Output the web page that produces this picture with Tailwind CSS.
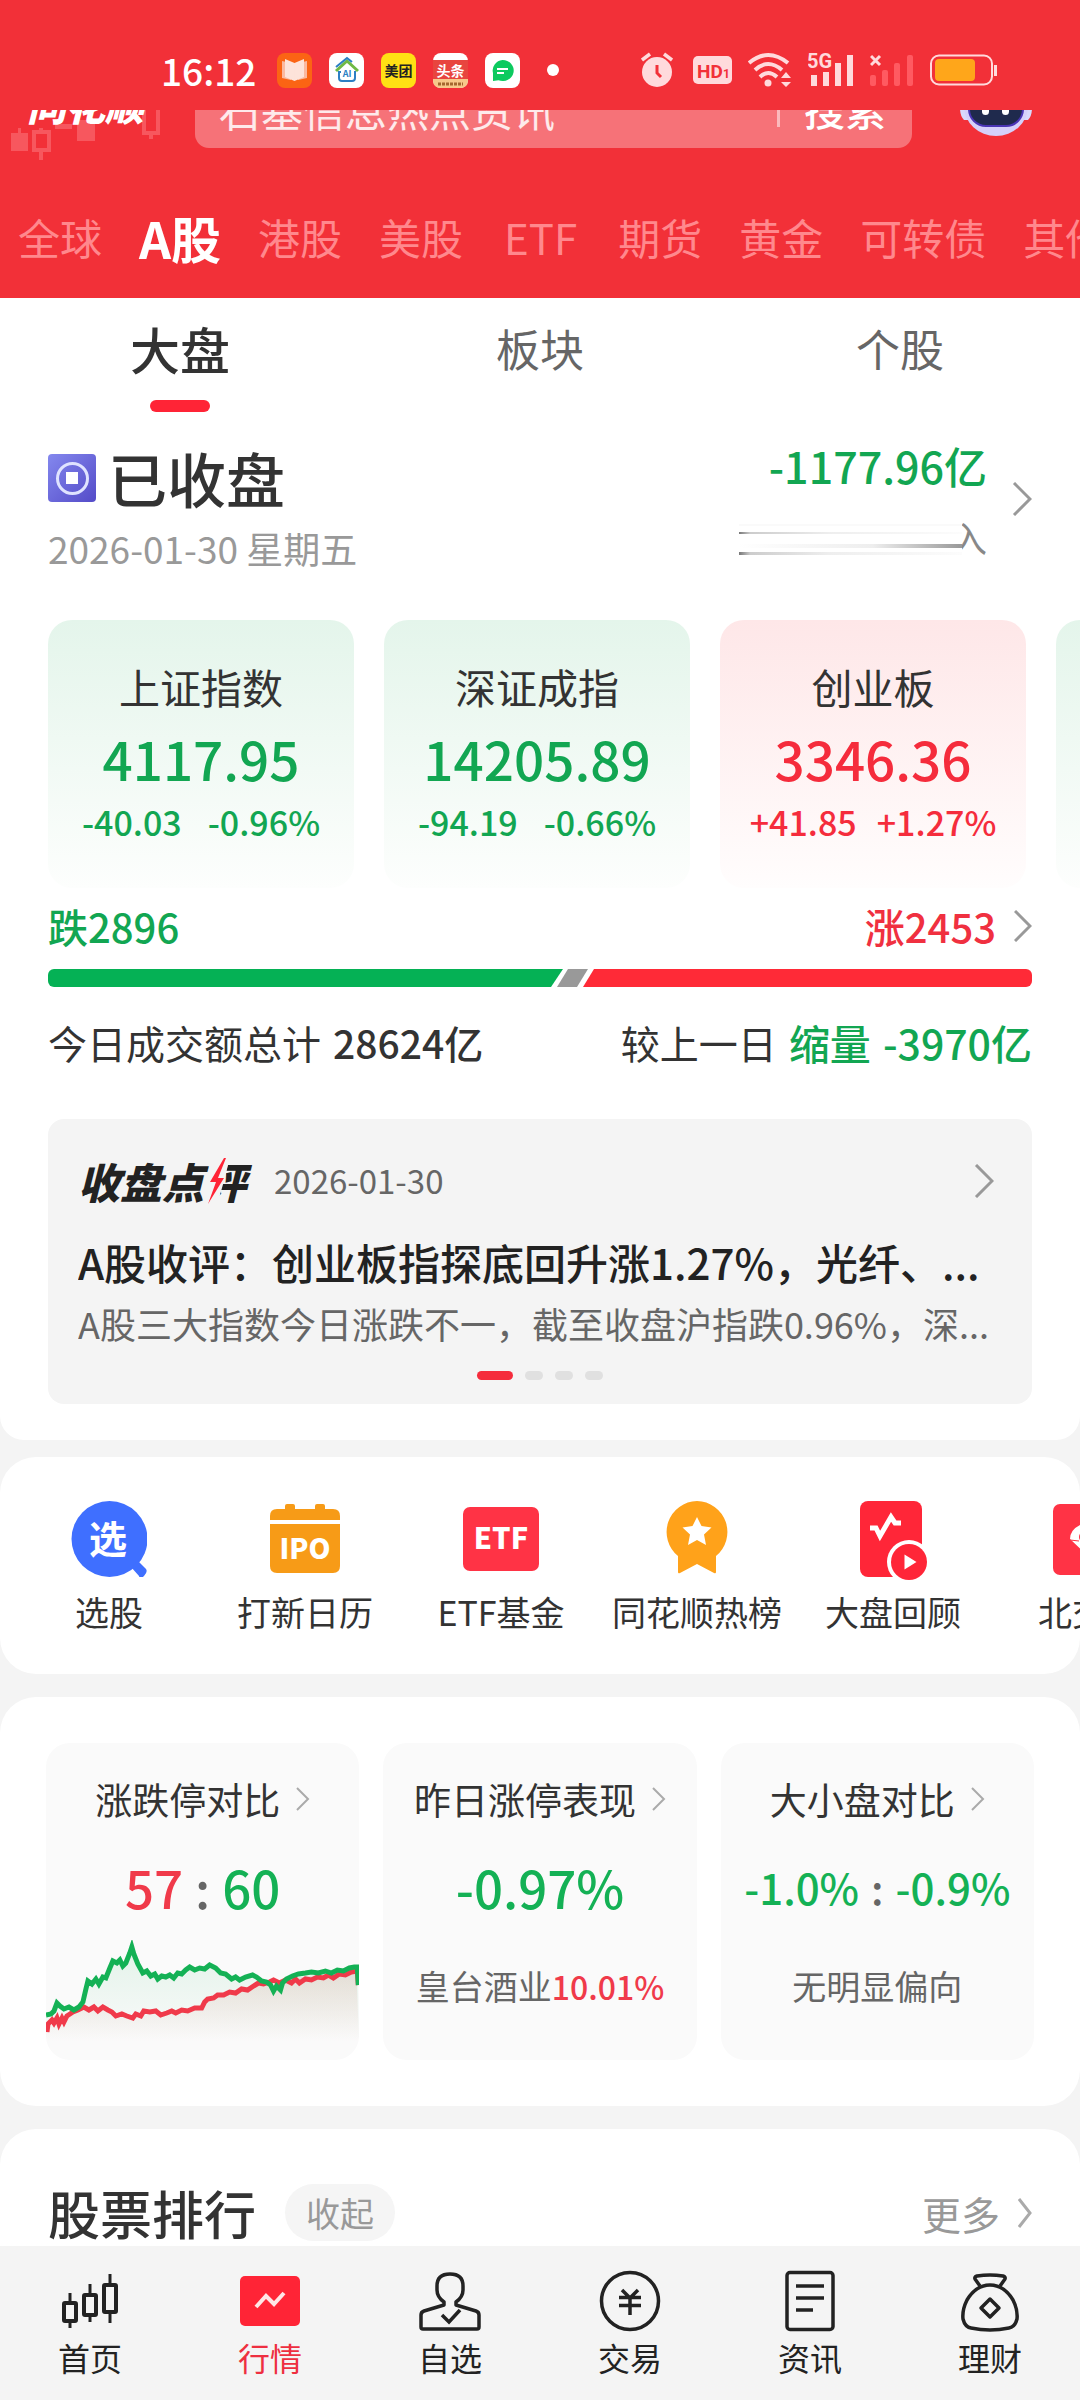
<!DOCTYPE html>
<html lang="zh-CN">
<head>
    <meta charset="UTF-8">
    <meta name="viewport" content="width=device-width, initial-scale=1.0">
    <title>行情 - A股</title>
    <script src="https://cdn.jsdelivr.net/npm/@tailwindcss/browser@4"></script>
</head>
<body class="bg-[#f4f4f4] min-h-screen flex flex-col overflow-x-hidden font-['Noto_Sans_CJK_SC',sans-serif] text-[#333]">

    <header class="bg-[#f23038] text-white">
        <!-- Status bar -->
        <div class="h-[110px] pt-[30px] pl-[161px] pr-[82px] flex items-center justify-between">
            <div class="flex items-center gap-[17px]">
                <span class="text-[37px] leading-10 font-medium mr-[4px]">16:12</span>
                <svg class="size-[35px]" viewBox="0 0 35 35">
                    <rect width="35" height="35" rx="8" fill="#fb6414"/>
                    <path d="M5 8l9 2v17l-9-2zM30 8l-9 2v17l9-2z" fill="#fbb9a0"/>
                    <path d="M8 6l9.500 4v18L8 24zM27 6l-9.500 4v18L27 24z" fill="#fde3da"/>
                </svg>
                <svg class="size-[35px]" viewBox="0 0 35 35">
                    <rect width="35" height="35" rx="8" fill="#fff"/>
                    <path d="M7 18L18 8l11 10" fill="none" stroke="#6fb944" stroke-width="3"/>
                    <path d="M7 14L18 5l5 4" fill="none" stroke="#2c7fc4" stroke-width="2"/>
                    <path d="M12 19H10v6q0 3 3 3h10q3 0 3-3v-6h-1" fill="none" stroke="#2c7fc4" stroke-width="2"/>
                    <text x="18" y="24" font-size="9" font-weight="700" fill="#2c7fc4" text-anchor="middle">AI</text>
                </svg>
                <svg class="size-[35px]" viewBox="0 0 35 35">
                    <rect width="35" height="35" rx="8" fill="#ffe014"/>
                    <text x="17.500" y="23" font-size="14" font-weight="700" fill="#222" text-anchor="middle">美团</text>
                </svg>
                <svg class="size-[35px]" viewBox="0 0 35 35">
                    <rect width="35" height="35" rx="8" fill="#fff"/>
                    <path d="M0 7h35v19H0z" fill="#e8453f"/>
                    <path d="M0 26h35v1q0 8-8 8H8q-8 0-8-8z" fill="#f7c98a"/>
                    <text x="17.500" y="23" font-size="14" font-weight="700" fill="#fff" text-anchor="middle">头条</text>
                    <path d="M5 31h25" stroke="#a5672f" stroke-width="3" stroke-dasharray="3 1"/>
                </svg>
                <svg class="size-[35px]" viewBox="0 0 35 35">
                    <rect width="35" height="35" rx="8" fill="#fff"/>
                    <path d="M17.500 7a11 10.500 0 1 1-4 20.200L8 28V20a11 10.500 0 0 1 9.500-13z" fill="#0cca5f"/>
                    <path d="M12 16h11M12 20h7" stroke="#fff" stroke-width="1.800"/>
                </svg>
                <span class="size-3 ml-[10px] rounded-full bg-white"></span>
            </div>
            <div class="flex items-center gap-4 text-[#ffdadc]">
                <svg class="w-8 h-9" viewBox="0 0 32 36" fill="currentColor">
                    <circle cx="16" cy="20" r="15"/>
                    <path d="M1 8l8-6M31 8l-8-6" stroke="currentColor" stroke-width="3.500"/>
                    <path d="M16 13v8l4 4" fill="none" stroke="#f23038" stroke-width="3"/>
                </svg>
                <svg class="w-[39px] h-7 ml-1" viewBox="0 0 39 28">
                    <rect width="39" height="28" rx="5" fill="currentColor"/>
                    <text x="4" y="22" font-size="19" font-weight="700" fill="#f23038" font-family="Liberation Sans Narrow, Roboto">HD</text>
                    <text x="30" y="22" font-size="12" font-weight="700" fill="#f23038" font-family="Roboto">1</text>
                </svg>
                <svg class="w-[44px] h-9" viewBox="0 0 44 36" fill="none" stroke="currentColor" stroke-width="4">
                    <path d="M1 11q19-16 39 0M7 18q13-12 27 0M12 25q8-8 17 0"/>
                    <circle cx="20" cy="31" r="3.500" fill="currentColor" stroke="none"/>
                    <path d="M38 20l5 6H33zM38 35l5-5H33z" fill="currentColor" stroke="none"/>
                </svg>
                <svg class="w-[46px] h-9" viewBox="0 0 46 36" fill="currentColor">
                    <text x="-1" y="16" font-size="20" font-weight="700" font-family="Liberation Sans Narrow, Roboto">5G</text>
                    <rect x="3" y="23" width="6" height="11"/><rect x="15" y="20" width="6" height="14"/>
                    <rect x="27" y="11" width="6" height="23"/><rect x="39" y="3" width="6" height="31"/>
                </svg>
                <svg class="w-[44px] h-9" viewBox="0 0 44 36">
                    <path d="M1 4l9 9M10 4l-9 9" stroke="currentColor" stroke-width="3"/>
                    <g fill="#ff5a61"><rect y="23" width="6" height="11" rx="2"/><rect x="12" y="18" width="6" height="16" rx="2"/><rect x="24" y="11" width="6" height="23" rx="2"/><rect x="37" y="3" width="6" height="31" rx="2"/></g>
                </svg>
                <svg class="w-[68px] h-8" viewBox="0 0 68 32">
                    <rect x="1" y="1.500" width="61" height="29" rx="8" fill="none" stroke="currentColor" stroke-width="2"/>
                    <rect x="5" y="5" width="40" height="22" rx="4" fill="#ffa61a"/>
                    <path d="M65.500 11v11" stroke="currentColor" stroke-width="3"/>
                </svg>
            </div>
        </div>

        <!-- Search row, scrolled partly under the status bar -->
        <div class="relative h-[70px] overflow-hidden flex items-end">
            <svg class="absolute left-0 top-0 w-[170px] h-[56px]" viewBox="0 0 170 56">
                <g fill="#f7575e"><rect x="11" y="23" width="17" height="18"/><rect x="18" y="18" width="3" height="6"/><rect x="77" y="10" width="18" height="21"/><rect x="55" y="14" width="17" height="5"/></g>
                <g fill="none" stroke="#f7575e" stroke-width="4"><rect x="34" y="22" width="15" height="18"/><path d="M41 42v8M41 18v3M144 0v23h14V0M151 23v6"/></g>
            </svg>
            <div class="relative shrink-0 w-full h-28 pb-8 pl-[27px] pr-12 flex items-center">
                <span class="w-[168px] pb-2 text-[39px] leading-[52px] font-black italic">同花顺</span>
                <div class="flex-1 h-20 rounded-[14px] bg-white/32 flex items-center pl-6 pr-[26px]">
                    <input type="text" aria-label="搜索股票" placeholder="石基信息热点资讯" class="flex-1 min-w-0 h-14 text-[42px] placeholder:text-white/85 outline-none">
                    <span class="w-[3px] h-[38px] mr-6 bg-white/50"></span>
                    <button type="button" class="text-[41px] leading-[52px] font-medium">搜索</button>
                </div>
                <button type="button" aria-label="智能助手" class="ml-12">
                    <svg class="w-[72px] h-20" viewBox="0 0 72 80">
                        <path d="M0 40h8v12H4q-4-4-4-12zM72 40h-8v12h4q4-4 4-12z" fill="#d9d9fb"/>
                        <ellipse cx="36" cy="38" rx="32" ry="30" fill="#d5d0fa"/>
                        <rect x="9" y="16" width="54" height="42" rx="17" fill="#1f2a4d" stroke="#4a35b5" stroke-width="2"/>
                        <rect x="22" y="32" width="7" height="15" rx="3.500" fill="#fff"/><rect x="42" y="32" width="7" height="15" rx="3.500" fill="#fff"/>
                    </svg>
                </button>
            </div>
        </div>

        <!-- Market tabs -->
        <nav class="h-[118px] pl-[18px] pb-[5px] flex items-center gap-[37px] overflow-hidden whitespace-nowrap text-[42px] leading-[60px] text-[#ff888d]">
            <a href="#">全球</a>
            <a href="#" class="text-[50px] font-bold text-white" aria-current="page">A股</a>
            <a href="#">港股</a>
            <a href="#">美股</a>
            <a href="#" class="px-1">ETF</a>
            <a href="#">期货</a>
            <a href="#">黄金</a>
            <a href="#">可转债</a>
            <a href="#">其他</a>
        </nav>
    </header>

    <main class="flex-1">
        <section class="bg-white rounded-b-3xl pb-9">
            <div class="grid grid-cols-3 h-[122px] items-start text-[44px] leading-[60px] text-[#666]">
                <button type="button" class="pt-5 flex flex-col items-center gap-[22px] text-[50px] font-medium text-[#333]">
                    大盘
                    <span class="w-[60px] h-3 rounded-full bg-[#ff2436]"></span>
                </button>
                <button type="button" class="pt-5">板块</button>
                <button type="button" class="pt-5">个股</button>
            </div>

            <div class="px-12 pt-[21px] flex justify-between">
                <div class="pt-[7px]">
                    <h1 class="flex items-center gap-3 text-[59px] leading-[60px] font-medium">
                        <svg class="size-12" viewBox="0 0 48 48">
                            <defs><linearGradient id="coin" x1="0" y1="0" x2="1" y2="1"><stop stop-color="#8488ee"/><stop offset="1" stop-color="#544bc8"/></linearGradient></defs>
                            <rect width="48" height="48" rx="4" fill="url(#coin)"/>
                            <circle cx="24.500" cy="24.500" r="15" fill="none" stroke="#dfe3ff" stroke-width="3"/>
                            <rect x="18" y="18" width="12" height="12" fill="#fff"/>
                        </svg>
                        已收盘
                    </h1>
                    <p class="mt-5 text-[37px] leading-10 text-[#999]">2026-01-30 星期五</p>
                </div>
                <a href="#" class="h-[115px] flex items-center gap-[25px]">
                    <div class="flex flex-col items-end gap-[33px]">
                        <span class="text-[43px] leading-[48px] font-medium text-[#12a652]">-1177.96亿</span>
                        <span class="flex h-[34px] text-[#888]">
                            <svg class="w-[223px] h-[34px]" viewBox="0 0 223 34">
                                <defs>
                                    <linearGradient id="fadeOut"><stop stop-color="#777"/><stop offset=".05" stop-color="#ccc"/><stop offset=".4" stop-color="#eee"/><stop offset="1" stop-color="#fcfcfc"/></linearGradient>
                                    <linearGradient id="fadeIn"><stop stop-color="#fff"/><stop offset=".6" stop-color="#eee"/><stop offset="1" stop-color="#999"/></linearGradient>
                                </defs>
                                <rect y="10" width="223" height="2" fill="url(#fadeOut)"/>
                                <rect y="30" width="223" height="3" fill="url(#fadeOut)"/>
                                <rect y="22" width="223" height="4" fill="url(#fadeIn)"/>
                                <rect y="2" width="223" height="2" fill="#fafafa"/>
                            </svg>
                            <span class="w-[25px] flex justify-end overflow-hidden text-[36px] leading-[30px]">入</span>
                        </span>
                    </div>
                    <svg class="w-5 h-[34px]" viewBox="0 0 20 34" fill="none" stroke="#999" stroke-width="3"><path d="M2 1l16 16L2 33"/></svg>
                </a>
            </div>

            <!-- Index cards -->
            <div class="mt-[52px] pl-12 flex gap-[30px] overflow-hidden text-center">
                <a href="#" class="shrink-0 w-[306px] pt-[38px] pb-[46px] flex flex-col gap-3 rounded-3xl bg-linear-to-b from-[#e4f5eb] to-[#fdfefd] text-[#12a652]">
                    <span class="text-[41px] leading-[56px] text-[#333]">上证指数</span>
                    <span class="text-[53px] leading-[64px] font-medium">4117.95</span>
                    <span class="flex justify-center gap-[26px] text-[34px] leading-10 font-medium"><span>-40.03</span><span>-0.96%</span></span>
                </a>
                <a href="#" class="shrink-0 w-[306px] pt-[38px] pb-[46px] flex flex-col gap-3 rounded-3xl bg-linear-to-b from-[#e4f5eb] to-[#fdfefd] text-[#12a652]">
                    <span class="text-[41px] leading-[56px] text-[#333]">深证成指</span>
                    <span class="text-[53px] leading-[64px] font-medium">14205.89</span>
                    <span class="flex justify-center gap-[26px] text-[34px] leading-10 font-medium"><span>-94.19</span><span>-0.66%</span></span>
                </a>
                <a href="#" class="shrink-0 w-[306px] pt-[38px] pb-[46px] flex flex-col gap-3 rounded-3xl bg-linear-to-b from-[#fee7e8] to-[#fffdfd] text-[#f52c3c]">
                    <span class="text-[41px] leading-[56px] text-[#333]">创业板</span>
                    <span class="text-[53px] leading-[64px] font-medium">3346.36</span>
                    <span class="flex justify-center gap-5 text-[34px] leading-10 font-medium"><span>+41.85</span><span>+1.27%</span></span>
                </a>
                <a href="#" aria-label="更多指数" class="shrink-0 w-[306px] rounded-3xl bg-linear-to-b from-[#e4f5eb] to-[#fdfefd]"></a>
            </div>

            <!-- Fallers and risers -->
            <div class="mt-[14px] px-12 flex justify-between text-[40px] leading-[48px] font-medium">
                <span class="text-[#12a652]">跌2896</span>
                <a href="#" class="flex items-center gap-[18px] text-[#f03040]">
                    涨2453
                    <svg class="w-[18px] h-8" viewBox="0 0 18 32" fill="none" stroke="#999" stroke-width="3"><path d="M1 1l15 15L1 31"/></svg>
                </a>
            </div>
            <div class="mt-[19px] mx-12 h-[18px] flex rounded-md overflow-hidden">
                <div class="flex-[515] bg-[#05b155] [clip-path:polygon(0_0,100%_0,calc(100%-12px)_100%,0_100%)]"></div>
                <div class="w-[31px] -ml-[6px] -mr-[5px] bg-[#999] [clip-path:polygon(11px_0,100%_0,calc(100%-11px)_100%,0_100%)]"></div>
                <div class="flex-[449] bg-[#ff2a37] [clip-path:polygon(11px_0,100%_0,100%_100%,0_100%)]"></div>
            </div>
            <div class="mt-[31px] px-12 flex justify-between text-[39px] leading-[48px]">
                <span class="flex gap-3">今日成交额总计 <span class="font-medium">28624亿</span></span>
                <span class="flex gap-3">较上一日 <span class="flex gap-3 text-[41px] font-medium text-[#12a652]"><span>缩量</span> <span>-3970亿</span></span></span>
            </div>

            <!-- Closing comment -->
            <article class="mt-[53px] mx-12 px-[30px] pt-[38px] pb-6 rounded-2xl bg-[#f4f4f4]">
                <div class="flex items-center h-12">
                    <h2 class="flex text-[42px] leading-[48px] font-black italic text-[#222]">
                        收盘点<span class="relative">评
                            <svg class="absolute left-0 top-0 w-7 h-12" viewBox="0 0 28 48">
                                <path d="M10 0h16l-6 24-7 24H-4z" fill="#f4f4f4"/>
                                <path d="M20 1L6 25h6L4 47l16-26h-6l8-20z" fill="#ff2436"/>
                            </svg>
                        </span>
                    </h2>
                    <time class="ml-7 text-[33px] text-[#666]">2026-01-30</time>
                    <svg class="ml-auto mr-2 w-5 h-[34px]" viewBox="0 0 20 34" fill="none" stroke="#999" stroke-width="3"><path d="M2 1l16 16L2 33"/></svg>
                </div>
                <h3 class="mt-[29px] text-[42px] leading-[56px] font-medium text-[#222] whitespace-nowrap overflow-hidden">A股收评：创业板指探底回升涨1.27%，光纤、...</h3>
                <p class="mt-[9px] text-[36px] leading-[48px] text-[#666] whitespace-nowrap overflow-hidden">A股三大指数今日涨跌不一，截至收盘沪指跌0.96%，深...</p>
                <div class="mt-6 flex justify-center gap-3">
                    <span class="w-9 h-[9px] rounded-full bg-[#f52c3c]"></span>
                    <span class="w-[18px] h-[9px] rounded-full bg-[#e0e0e0]"></span>
                    <span class="w-[18px] h-[9px] rounded-full bg-[#e0e0e0]"></span>
                    <span class="w-[18px] h-[9px] rounded-full bg-[#e0e0e0]"></span>
                </div>
            </article>
        </section>

        <!-- Shortcuts -->
        <section class="mt-[17px] pt-11 pb-[38px] pl-[11px] flex overflow-hidden bg-white rounded-[36px] text-[34px] leading-[48px] whitespace-nowrap">
            <a href="#" class="shrink-0 w-[196px] flex flex-col items-center gap-[11px]">
                <svg class="size-[76px]" viewBox="0 0 76 76">
                    <circle cx="38.500" cy="38" r="38" fill="#3f6fff"/>
                    <path d="M60 66l7-6 8 8q2 3-2 7t-5 0z" fill="#3f6fff"/>
                    <text x="37" y="52" font-size="38" font-weight="700" fill="#fff" text-anchor="middle">选</text>
                </svg>
                选股
            </a>
            <a href="#" class="shrink-0 w-[196px] flex flex-col items-center gap-[11px]">
                <svg class="size-[76px]" viewBox="0 0 76 76">
                    <path d="M3 19v-4q0-7 7-7h8V5q0-2 2-2h6q2 0 2 2v3h20V5q0-2 2-2h6q2 0 2 2v3h8q7 0 7 7v4zM3 23h70v42q0 7-7 7H10q-7 0-7-7z" fill="#f79b17"/>
                    <text x="38" y="58" font-size="28" font-weight="900" fill="#fff" text-anchor="middle">IPO</text>
                </svg>
                打新日历
            </a>
            <a href="#" class="shrink-0 w-[196px] flex flex-col items-center gap-[11px]">
                <svg class="size-[76px]" viewBox="0 0 76 76">
                    <rect y="6" width="76" height="64" rx="7" fill="#ff3345"/>
                    <text x="38" y="48" font-size="29" font-weight="900" fill="#fff" text-anchor="middle">ETF</text>
                </svg>
                ETF基金
            </a>
            <a href="#" class="shrink-0 w-[196px] flex flex-col items-center gap-[11px]">
                <svg class="size-[76px]" viewBox="0 0 76 76">
                    <path d="M38 0a31 31 0 0 1 19 55v16q0 2-2 1l-17-9-17 9q-2 1-2-1V55A31 31 0 0 1 38 0z" fill="#ffa21a"/>
                    <path d="M38 16l4.500 9 10 1.500-7.500 7 2 10.500-9-5-9 5 2-10.500-7.500-7 10-1.500z" fill="#fff"/>
                </svg>
                同花顺热榜
            </a>
            <a href="#" class="shrink-0 w-[196px] flex flex-col items-center gap-[11px]">
                <svg class="size-[76px] overflow-visible" viewBox="0 0 76 76">
                    <rect x="5" width="62" height="76" rx="8" fill="#ff2638"/>
                    <path d="M15 27h6l4 8 11-19 4 6h6" fill="none" stroke="#fff" stroke-width="5"/>
                    <circle cx="54" cy="61" r="22" fill="#fff"/><circle cx="54" cy="61" r="18" fill="#ff2638"/>
                    <path d="M49.500 53.500v15l12-7.500z" fill="#fff"/>
                </svg>
                大盘回顾
            </a>
            <a href="#" class="shrink-0 w-[196px] flex flex-col items-center gap-[11px]">
                <svg class="size-[76px]" viewBox="0 0 76 76">
                    <rect x="2" y="3" width="72" height="71" rx="7" fill="#ff3345"/>
                    <path d="M38 56L19 38q0-10 12-15 4 6 7 6t7-6q12 5 12 15z" fill="#fff"/><path d="M19 39l9 1" stroke="#ff3345"/><circle cx="34" cy="36" r="6" fill="#ff3345"/>
                </svg>
                北交所
            </a>
        </section>

        <!-- Market statistics -->
        <section class="mt-[23px] px-[46px] py-[46px] bg-white rounded-[36px]">
            <div class="grid grid-cols-3 gap-6 text-center">
                <a href="#" class="relative h-[317px] pt-8 rounded-3xl bg-[#fafafa] overflow-hidden">
                    <h4 class="flex items-center justify-center gap-4 text-[37px] leading-[48px]">
                        涨跌停对比
                        <svg class="w-[14px] h-6" viewBox="0 0 14 24" fill="none" stroke="#aaa" stroke-width="2"><path d="M1 1l11 11L1 23"/></svg>
                    </h4>
                    <p class="mt-8 flex justify-center gap-3 text-[51px] leading-[64px] font-medium text-[#666]">
                        <span class="text-[#f03a4a]">57</span><span>:</span><span class="text-[#14b155]">60</span>
                    </p>
                    <svg class="absolute left-0 bottom-0 w-full h-[120px]" viewBox="0 0 314 120" preserveAspectRatio="none">
                        <defs>
                            <linearGradient id="greenArea" x1="0" y1="0" x2="0" y2="1"><stop stop-color="#14b155" stop-opacity=".1"/><stop offset="1" stop-color="#14b155" stop-opacity="0"/></linearGradient>
                            <linearGradient id="redArea" x1="0" y1="0" x2="0" y2="1"><stop stop-color="#c86450" stop-opacity=".16"/><stop offset=".9" stop-color="#c86450" stop-opacity="0"/></linearGradient>
                        </defs>
                        <path d="M0 75L11 66L34 68L41 42L56 38L66 22L77 25L86 7L96 32L131 35L144 28L166 27L187 38L211 36L230 51L239 40L257 33L312 26L314 100H0z" fill="url(#greenArea)"/>
                        <path d="M0 85L37 67L87 77L156 68L162 59L217 42L311 30L314 110H0z" fill="url(#redArea)"/>
                        <path d="M1 92L2 84L6 80L8 83L11 78L13 84L16 78L18 82L21 76L24 74L27 72L32 70L38 67L43 70L48 67L52 71L57 67L62 70L66 72L70 76L76 74L81 76L87 78L90 74L95 76L98 71L104 72L110 71L115 75L121 73L126 71L130 73L136 70L142 71L149 68L156 68L159 62L162 59L168 58L172 55L178 55L184 52L190 53L196 49L202 50L208 46L213 43L218 44L224 42L228 40L234 43L240 40L246 43L250 39L254 43L260 39L266 40L272 37L278 38L283 35L288 38L294 34L300 35L306 32L312 31L313 45" fill="none" stroke="#f03a4a" stroke-width="5"/>
                        <path d="M0 75L5 74L8 71L11 63L14 66L18 69L23 67L28 70L33 67L37 62L40 49L42 41L46 44L50 39L53 44L57 37L60 38L64 28L67 21L71 23L74 20L77 26L80 23L84 13L86 7L88 14L92 24L97 33L101 31L105 36L109 34L112 39L116 36L120 37L124 35L128 38L132 33L136 34L140 30L144 27L149 30L154 28L159 29L164 25L170 28L175 33L180 34L186 39L190 37L194 40L200 37L207 35L211 37L216 41L221 42L225 45L228 51L231 46L235 50L237 43L241 39L247 36L253 34L260 33L266 32L273 33L280 31L286 33L292 30L298 31L304 28L309 27L312 27L313 45" fill="none" stroke="#14b155" stroke-width="5"/>
                    </svg>
                </a>
                <a href="#" class="pt-8 rounded-3xl bg-[#fafafa]">
                    <h4 class="flex items-center justify-center gap-4 text-[37px] leading-[48px]">
                        昨日涨停表现
                        <svg class="w-[14px] h-6" viewBox="0 0 14 24" fill="none" stroke="#aaa" stroke-width="2"><path d="M1 1l11 11L1 23"/></svg>
                    </h4>
                    <p class="mt-8 text-[51px] leading-[64px] font-medium text-[#14b155]">-0.97%</p>
                    <p class="mt-[43px] text-[34px] leading-[48px] text-[#666]">皇台酒业<span class="text-[32px] font-medium text-[#f03a4a]">10.01%</span></p>
                </a>
                <a href="#" class="pt-8 rounded-3xl bg-[#fafafa]">
                    <h4 class="flex items-center justify-center gap-4 text-[37px] leading-[48px]">
                        大小盘对比
                        <svg class="w-[14px] h-6" viewBox="0 0 14 24" fill="none" stroke="#aaa" stroke-width="2"><path d="M1 1l11 11L1 23"/></svg>
                    </h4>
                    <p class="mt-8 flex justify-center gap-3 text-[42px] leading-[64px] font-medium text-[#14b155]">
                        <span>-1.0%</span><span class="text-[#666]">:</span><span>-0.9%</span>
                    </p>
                    <p class="mt-[43px] text-[34px] leading-[48px] text-[#666]">无明显偏向</p>
                </a>
            </div>
        </section>

        <!-- Stock ranking -->
        <section class="mt-[23px] px-12 pt-[55px] pb-[5px] flex items-center bg-white rounded-t-[36px]">
            <h2 class="text-[52px] leading-[57px] font-medium">股票排行</h2>
            <button type="button" class="ml-[29px] w-[110px] h-[57px] rounded-full bg-[#f5f5f5] text-[34px] leading-[48px] text-[#999]">收起</button>
            <a href="#" class="ml-auto flex items-center gap-[18px] text-[39px] leading-[48px] text-[#999]">
                更多
                <svg class="w-[14px] h-[30px]" viewBox="0 0 14 30" fill="none" stroke="#aaa" stroke-width="3"><path d="M1 1l11 14L1 29"/></svg>
            </a>
        </section>
    </main>

    <nav class="sticky bottom-0 pt-[22px] pb-[23px] grid grid-cols-6 bg-[#f4f4f4] text-[32px] leading-10 text-[#222]">
        <a href="#" class="flex flex-col items-center gap-[5px]">
            <svg class="size-16" viewBox="0 0 64 64" fill="none" stroke="currentColor" stroke-width="4">
                <rect x="6" y="35" width="12" height="18" rx="1"/><rect x="26" y="27" width="12" height="20" rx="1"/><rect x="46" y="17" width="12" height="27" rx="1"/>
                <path d="M12 25v10M12 53v7M32 16v11M32 47v7M52 6v11M52 44v11" stroke-width="3"/>
            </svg>
            首页
        </a>
        <a href="#" aria-current="page" class="flex flex-col items-center gap-[5px] text-[#ee2f40]">
            <svg class="size-16" viewBox="0 0 64 64">
                <rect x="2" y="8" width="60" height="50" rx="5" fill="#ff2436"/>
                <path d="M18 39l10-11 8 8 10-11" fill="none" stroke="#ffe6e6" stroke-width="4"/>
            </svg>
            行情
        </a>
        <a href="#" class="flex flex-col items-center gap-[5px]">
            <svg class="size-16" viewBox="0 0 64 64" fill="none" stroke="currentColor" stroke-width="3.500">
                <path d="M26 34q-7-5-7-12v-4q0-12 13-12t13 12v4q0 7-7 12v3l20 6q3 1 3 4v12q0 2-2 2H5q-2 0-2-2V47q0-3 3-4l20-6z" stroke-linejoin="round"/>
                <path d="M24 47l7 7 11-12"/>
            </svg>
            自选
        </a>
        <a href="#" class="flex flex-col items-center gap-[5px]">
            <svg class="size-16" viewBox="0 0 64 64" fill="none" stroke="currentColor" stroke-width="3.500">
                <circle cx="32" cy="33" r="28.500"/>
                <path d="M24 22l8 8 8-8M21 29.500h22M21 37.500h22M32 29v18"/>
            </svg>
            交易
        </a>
        <a href="#" class="flex flex-col items-center gap-[5px]">
            <svg class="size-16" viewBox="0 0 64 64" fill="none" stroke="currentColor" stroke-width="3.500">
                <rect x="9" y="4.500" width="46" height="57" rx="3"/>
                <path d="M18 18h28M18 30h28M18 42h17"/>
            </svg>
            资讯
        </a>
        <a href="#" class="flex flex-col items-center gap-[5px]">
            <svg class="size-16" viewBox="0 0 64 64" fill="none" stroke="currentColor" stroke-width="3.500" stroke-linejoin="round">
                <path d="M22 18l-5-7q-1-2 2-3 13-2 26 0 3 1 2 3l-5 7"/>
                <path d="M32 17q14 0 23 15 5 10 4 19-2 8-8 9-19 4-38 0-6-1-8-9-1-9 4-19 9-15 23-15z"/>
                <path d="M32 31l9 9-9 9-9-9z"/>
            </svg>
            理财
        </a>
    </nav>
</body>
</html>
